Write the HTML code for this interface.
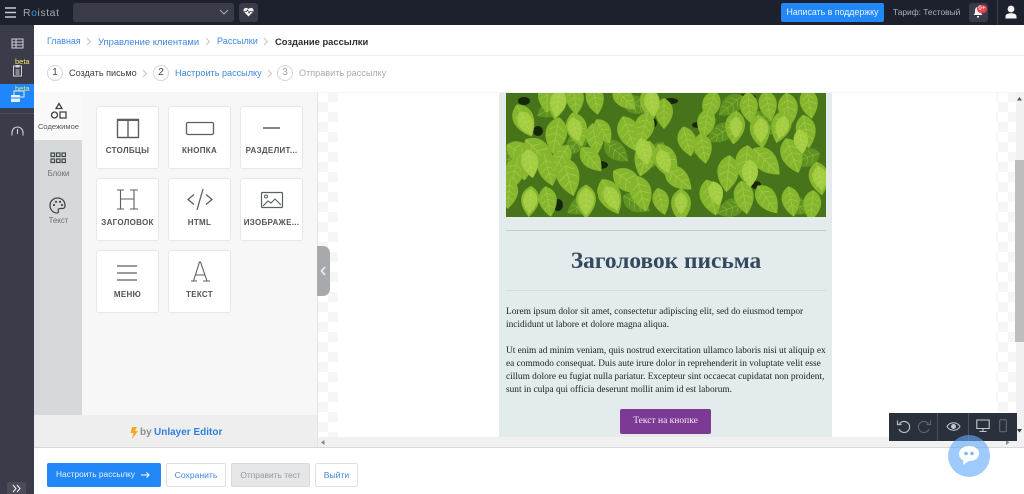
<!DOCTYPE html>
<html><head><meta charset="utf-8">
<style>
*{box-sizing:border-box}
html,body{margin:0;padding:0;width:1024px;height:494px;overflow:hidden;background:#fff;font-family:"Liberation Sans",sans-serif}
.a{position:absolute}
.t{position:absolute;white-space:nowrap}
.card{position:absolute;width:63px;height:63px;background:#fff;border:1px solid #e8e8e8;border-radius:3px;box-shadow:0 0 1px rgba(0,0,0,.05)}
.card span{position:absolute;left:0;right:0;top:39px;text-align:center;font-size:8px;font-weight:bold;color:#505659;letter-spacing:.3px;white-space:nowrap}
.card svg{position:absolute;left:0;top:0}
.chev{fill:none;stroke:#c4c7c9;stroke-width:1}
.num{position:absolute;width:16px;height:16px;border:1px solid #d5d5d5;border-radius:50%;text-align:center;font-size:10px;line-height:14px;background:#fff}
.btn{position:absolute;border-radius:2px;font-size:8.6px;text-align:center;line-height:23px;height:24px}
.bc{position:absolute;white-space:nowrap;top:36px;font-size:9.4px;color:#3f86e0}
.st{position:absolute;white-space:nowrap;top:68px;font-size:9.1px}
</style></head>
<body>
<div class="a" style="left:0;top:0;width:1024px;height:25px;background:#1d212d"></div>
<svg class="a" style="left:5px;top:7px" width="12" height="11"><path d="M0 1h11M0 5.500h11M0 10h11" stroke="#c8cacd" stroke-width="1.400"/></svg>
<div class="t" style="left:23px;top:7px;font-size:10.500px;color:#a4a9b0;letter-spacing:.55px">R<span style="color:#3f8fe8">o</span>istat</div>
<div class="a" style="left:73px;top:3px;width:161px;height:19px;background:#393c48;border-radius:3px"></div>
<svg class="a" style="left:219px;top:9px" width="10" height="7"><path d="M1 1l4 4 4-4" fill="none" stroke="#a5a8ae" stroke-width="1.100"/></svg>
<div class="a" style="left:239px;top:3px;width:19px;height:19px;background:#393c48;border-radius:3px"></div>
<svg class="a" style="left:243px;top:7px" width="11" height="10"><path d="M5.500 9.500L.8 4.600C-.6 2 2.800-.8 5.500 2 8.200-.8 11.600 2 10.200 4.600Z" fill="#f2f2f2"/><path d="M1 4.500h2.500l1-1.500 1.500 3 1-1.500H10" fill="none" stroke="#393c48" stroke-width=".7"/></svg>
<div class="a" style="left:781px;top:3px;width:103px;height:19px;background:#2288f8;border-radius:2px"></div>
<div class="t" style="left:781px;top:3px;width:103px;text-align:center;font-size:8.800px;line-height:19px;color:#e8f2ff">Написать в поддержку</div>
<div class="t" style="left:893px;top:7px;font-size:8.400px;color:#aeb1b6">Тариф: Тестовый</div>
<div class="a" style="left:969px;top:3px;width:19px;height:19px;background:#393c48;border-radius:3px"></div>
<svg class="a" style="left:973px;top:7px" width="10" height="11"><path d="M5 0C2.500 0 2 2 2 4.500 2 6.500 1 7.500 .5 8h9C9 7.500 8 6.500 8 4.500 8 2 7.500 0 5 0ZM4 9h2v1.500H4Z" fill="#f4f4f4"/></svg>
<div class="a" style="left:977px;top:5px;width:10px;height:8px;background:#e8434c;border-radius:4px;color:#fff;font-size:6.500px;line-height:8px;text-align:center">9+</div>
<div class="a" style="left:997px;top:0;width:1px;height:25px;background:#3b3e49"></div>
<svg class="a" style="left:1005px;top:5px" width="12" height="14"><circle cx="6" cy="4" r="3.400" fill="#f4f4f4"/><path d="M.5 13.500V11.500C.5 9.500 2.500 8.300 6 8.300S11.500 9.500 11.500 11.500V13.500Z" fill="#f4f4f4"/></svg>

<div class="a" style="left:0;top:25px;width:34px;height:469px;background:#3a3d49"></div>
<div class="a" style="left:0;top:84px;width:34px;height:24px;background:#1f87fb"></div>
<div class="a" style="left:0;top:113px;width:34px;height:1px;background:#4c4f5a"></div>
<svg class="a" style="left:11px;top:38px" width="13" height="11"><path d="M1 1h11v9H1ZM1 4h11M1 7h11M5 1v9" fill="none" stroke="#d0d1d4" stroke-width="1"/></svg>
<svg class="a" style="left:12px;top:64px" width="11" height="13"><path d="M1.500 2h8v10h-8ZM4 1.500h3v1.500H4ZM3.500 6h4M3.500 8h4M3.500 10h4" fill="none" stroke="#d0d1d4" stroke-width="1"/></svg>
<div class="t" style="left:15px;top:57px;font-size:7.500px;color:#f4e46a">beta</div>
<svg class="a" style="left:10px;top:90px" width="15" height="13"><rect x="4" y="1" width="10" height="6" fill="none" stroke="#e6f1ff"/><rect x="1" y="5" width="9" height="7" fill="#e6f1ff"/><path d="M1 8h9" stroke="#1f87fb"/></svg>
<div class="t" style="left:15px;top:84px;font-size:7.500px;color:#f4e46a">beta</div>
<svg class="a" style="left:11px;top:126px" width="13" height="10"><path d="M1 9.500V6.500A5.500 5.500 0 0 1 12 6.500V9.500M6.500 3v5" fill="none" stroke="#cfd0d3" stroke-width="1.100"/></svg>
<div class="a" style="left:7px;top:482px;width:19px;height:12px;background:#4a4d59;border-radius:2px 2px 0 0"></div>
<svg class="a" style="left:12px;top:484px" width="10" height="9"><path d="M1 1l3 3.500-3 3.500M5 1l3 3.500-3 3.500" fill="none" stroke="#eee" stroke-width="1.100"/></svg>

<div class="bc" style="left:47px;font-size:8.800px">Главная</div>
<svg class="a" style="left:86px;top:37px" width="7" height="9"><path class="chev" d="M1 1l3.500 3.500L1 8"/></svg>
<div class="bc" style="left:98px">Управление клиентами</div>
<svg class="a" style="left:205px;top:37px" width="7" height="9"><path class="chev" d="M1 1l3.500 3.500L1 8"/></svg>
<div class="bc" style="left:217px;font-size:9.100px">Рассылки</div>
<svg class="a" style="left:263px;top:37px" width="7" height="9"><path class="chev" d="M1 1l3.500 3.500L1 8"/></svg>
<div class="t" style="left:275px;top:36px;font-size:9.400px;font-weight:bold;color:#2c2f33">Создание рассылки</div>
<div class="a" style="left:34px;top:55px;width:990px;height:1px;background:#eeeeee"></div>

<div class="num" style="left:47px;top:65px;color:#444">1</div>
<div class="st" style="left:69px;color:#3b3e42">Создать письмо</div>
<svg class="a" style="left:142px;top:69px" width="7" height="9"><path class="chev" d="M1 1l3.500 3.500L1 8"/></svg>
<div class="num" style="left:153px;top:65px;color:#444">2</div>
<div class="st" style="left:175px;color:#3f86e0">Настроить рассылку</div>
<svg class="a" style="left:267px;top:69px" width="7" height="9"><path class="chev" d="M1 1l3.500 3.500L1 8"/></svg>
<div class="num" style="left:277px;top:65px;color:#a5a5a5">3</div>
<div class="st" style="left:299px;color:#a8aaad">Отправить рассылку</div>

<!-- panel -->
<div class="a" style="left:34px;top:92px;width:284px;height:355px;background:#f7f7f7;border-right:1px solid #e4e4e4"></div>
<div class="a" style="left:34px;top:140px;width:48px;height:275px;background:#d5d9dc"></div>
<div class="a" style="left:34px;top:92px;width:48px;height:48px;background:#f9f9f9"></div>
<svg class="a" style="left:50px;top:102px" width="18" height="18"><path d="M9 1.500l3 5H6ZM10 10h6v6h-6Z" fill="none" stroke="#3e4245" stroke-width="1.300"/><circle cx="4.500" cy="13" r="3" fill="none" stroke="#3e4245" stroke-width="1.300"/></svg>
<div class="t" style="left:34px;top:122px;width:49px;text-align:center;font-size:7.600px;color:#55595c">Содежимое</div>
<svg class="a" style="left:50px;top:152px" width="16" height="12"><g fill="none" stroke="#42474a" stroke-width="1.200"><rect x="1" y="1" width="3.500" height="3.500"/><rect x="6.500" y="1" width="3.500" height="3.500"/><rect x="12" y="1" width="3.500" height="3.500"/><rect x="1" y="7" width="3.500" height="3.500"/><rect x="6.500" y="7" width="3.500" height="3.500"/><rect x="12" y="7" width="3.500" height="3.500"/></g></svg>
<div class="t" style="left:34px;top:169px;width:49px;text-align:center;font-size:7.800px;color:#6b7074">Блоки</div>
<svg class="a" style="left:49px;top:197px" width="17" height="17"><path d="M8.500 1C4 1 1 4.500 1 8.500S4 16 8 16c1.500 0 1.800-1 1.300-2-.6-1.300.2-2.500 1.700-2.500h2.500c1.500 0 2.500-1 2.500-3C16 4 13 1 8.500 1Z" fill="none" stroke="#42474a" stroke-width="1.300"/><circle cx="5" cy="8" r="1.100" fill="#42474a"/><circle cx="7" cy="4.800" r="1.100" fill="#42474a"/><circle cx="11" cy="4.800" r="1.100" fill="#42474a"/><circle cx="13" cy="8" r="1.100" fill="#42474a"/></svg>
<div class="t" style="left:34px;top:216px;width:49px;text-align:center;font-size:7.800px;color:#6b7074">Текст</div>

<div class="card" style="left:96px;top:106px"><svg width="61" height="40"><path d="M20.500 12.500h21v18h-21ZM31 12.500v18" fill="none" stroke="#5a5f62" stroke-width="1.400"/><path d="M20 12h22v2H20Z" fill="#5a5f62"/></svg><span>СТОЛБЦЫ</span></div>
<div class="card" style="left:168px;top:106px"><svg width="61" height="40"><rect x="17.500" y="15.500" width="27" height="12" rx="1.500" fill="none" stroke="#5a5f62" stroke-width="1.300"/></svg><span>КНОПКА</span></div>
<div class="card" style="left:240px;top:106px"><svg width="61" height="40"><path d="M22 21h17" stroke="#5a5f62" stroke-width="1.500"/></svg><span>РАЗДЕЛИТ...</span></div>
<div class="card" style="left:96px;top:178px"><svg width="61" height="40"><path d="M20 11h7M33 11h8M20 30h7M33 30h8M23.500 11v19M37 11v19M23.500 20H37" fill="none" stroke="#5a5f62" stroke-width="1.100"/></svg><span>ЗАГОЛОВОК</span></div>
<div class="card" style="left:168px;top:178px"><svg width="61" height="40"><path d="M25 15.500l-6 5 6 5M37 15.500l6 5-6 5M34 10l-6 21" fill="none" stroke="#5a5f62" stroke-width="1.300"/></svg><span>HTML</span></div>
<div class="card" style="left:240px;top:178px"><svg width="61" height="40"><rect x="20.500" y="13.500" width="21" height="15" rx="1" fill="none" stroke="#5a5f62" stroke-width="1.200"/><circle cx="25" cy="17.500" r="1.500" fill="none" stroke="#5a5f62"/><path d="M22 27l5-5 3 2 4-4 6 6" fill="none" stroke="#5a5f62" stroke-width="1.100"/></svg><span>ИЗОБРАЖЕ...</span></div>
<div class="card" style="left:96px;top:250px"><svg width="61" height="40"><path d="M20 15h20M20 22h20M20 29h20" stroke="#5a5f62" stroke-width="1.200"/></svg><span>МЕНЮ</span></div>
<div class="card" style="left:168px;top:250px"><svg width="61" height="40"><path d="M22 30h6M34 30h7M24.500 30l6-19h1l6.500 19M27 24h9.500" fill="none" stroke="#5a5f62" stroke-width="1.100"/></svg><span>ТЕКСТ</span></div>

<div class="a" style="left:34px;top:415px;width:283px;height:32px;background:#eeeeee"></div>
<svg class="a" style="left:130px;top:427px" width="8" height="12"><path d="M2 0h5L5 4h3L2 12l1.500-6H.5Z" fill="#f5a623"/></svg>
<div class="t" style="left:140px;top:427px;font-size:10px;font-weight:bold;color:#8c8f92">by</div>
<div class="t" style="left:154px;top:427px;font-size:10px;font-weight:bold;color:#2f7fe0">Unlayer Editor</div>

<!-- canvas -->
<div class="a" style="left:318px;top:92px;width:698px;height:345px;background-color:#fff;background-image:conic-gradient(#f6f6f6 25%,#fff 0 50%,#f6f6f6 0 75%,#fff 0);background-size:20px 20px"></div>
<div class="a" style="left:338px;top:92px;width:658px;height:345px;background:#fff"></div>
<div class="a" style="left:499px;top:92px;width:333px;height:345px;background:#e3ebed"></div>
<div class="a" style="left:318px;top:92px;width:706px;height:1px;background:#f4f4f4"></div>

<svg class="a" style="left:506px;top:93px" width="320" height="124" viewBox="0 0 320 124">
<defs>
<g id="l"><path d="M0 -15C12 -9 12 4 0 16C-12 4 -12 -9 0 -15Z"/><path d="M0 -14V15M0 -8L6 -4M0 -8L-6 -4M0 -2L7 2M0 -2L-7 2M0 4L5 8M0 4L-5 8" fill="none" stroke="#d4ea70" stroke-opacity=".35" stroke-width=".7"/></g>
</defs>
<rect width="320" height="124" fill="#47741a"/>
<g fill="#162608">
<ellipse cx="18" cy="8" rx="6" ry="4"/><ellipse cx="32" cy="38" rx="5" ry="5"/><ellipse cx="100" cy="102" rx="9" ry="3"/><ellipse cx="94" cy="72" rx="8" ry="4"/><ellipse cx="52" cy="112" rx="5" ry="6"/><ellipse cx="192" cy="32" rx="6" ry="3"/><ellipse cx="240" cy="4" rx="10" ry="3"/><ellipse cx="290" cy="60" rx="8" ry="3"/><ellipse cx="146" cy="30" rx="5" ry="5"/><ellipse cx="165" cy="8" rx="7" ry="3"/><ellipse cx="250" cy="92" rx="5" ry="4"/>
</g>
<g fill="#5f9221">
<use href="#l" transform="translate(5 62) rotate(20)"/><use href="#l" transform="translate(30 60) rotate(-30)"/><use href="#l" transform="translate(70 50) rotate(40)"/><use href="#l" transform="translate(110 58) rotate(-50)"/><use href="#l" transform="translate(150 62) rotate(30)"/><use href="#l" transform="translate(190 52) rotate(-70)"/><use href="#l" transform="translate(215 40) rotate(60)"/><use href="#l" transform="translate(260 30) rotate(-40)"/><use href="#l" transform="translate(300 65) rotate(70)"/>
<use href="#l" transform="translate(45 15) rotate(60)"/><use href="#l" transform="translate(130 12) rotate(-70)"/><use href="#l" transform="translate(225 12) rotate(50)"/>
<use href="#l" transform="translate(75 112) rotate(60)"/><use href="#l" transform="translate(130 110) rotate(-60)"/><use href="#l" transform="translate(225 115) rotate(70)"/><use href="#l" transform="translate(290 112) rotate(-60)"/>
</g>
<g fill="#86b62e">
<use href="#l" transform="translate(41 4) rotate(0) scale(1)"/><use href="#l" transform="translate(51 9) rotate(8) scale(1.100)"/><use href="#l" transform="translate(69 6) rotate(-5)"/><use href="#l" transform="translate(89 6) rotate(-10)"/><use href="#l" transform="translate(118 5) rotate(-45)"/><use href="#l" transform="translate(144 10) rotate(-8) scale(1.100)"/><use href="#l" transform="translate(158 20) rotate(0)"/><use href="#l" transform="translate(205 12) rotate(15)"/><use href="#l" transform="translate(243 14) rotate(-5)"/><use href="#l" transform="translate(262 12) rotate(-10)"/><use href="#l" transform="translate(282 16) rotate(-5) scale(1.100)"/><use href="#l" transform="translate(303 10) rotate(-10)"/>
<use href="#l" transform="translate(18 27) rotate(-25) scale(1.150)"/><use href="#l" transform="translate(50 42) rotate(10) scale(1.200)"/><use href="#l" transform="translate(71 36) rotate(-15) scale(1.150)"/><use href="#l" transform="translate(89 45) rotate(-10)"/><use href="#l" transform="translate(97 38) rotate(-30) scale(.9)"/><use href="#l" transform="translate(123 40) rotate(-20) scale(1.200)"/><use href="#l" transform="translate(138 35) rotate(15) scale(1.100)"/><use href="#l" transform="translate(181 48) rotate(-15)"/><use href="#l" transform="translate(200 30) rotate(10)"/><use href="#l" transform="translate(229 34) rotate(5) scale(1.100)"/><use href="#l" transform="translate(254 38) rotate(-8) scale(1.100)"/><use href="#l" transform="translate(275 33) rotate(15) scale(1.100)"/><use href="#l" transform="translate(300 38) rotate(-10) scale(1.100)"/>
<use href="#l" transform="translate(15 60) rotate(-60) scale(1.100)"/><use href="#l" transform="translate(33 60) rotate(-45) scale(1.300)"/><use href="#l" transform="translate(17 70) rotate(-5) scale(1.100)"/><use href="#l" transform="translate(8 80) rotate(15) scale(1.100)"/><use href="#l" transform="translate(42 76) rotate(-15) scale(1.100)"/><use href="#l" transform="translate(62 83) rotate(-15) scale(1.300)"/><use href="#l" transform="translate(55 65) rotate(30)"/><use href="#l" transform="translate(85 66) rotate(-40)"/><use href="#l" transform="translate(122 88) rotate(-55) scale(1.200)"/><use href="#l" transform="translate(139 65) rotate(15) scale(1.200)"/><use href="#l" transform="translate(160 68) rotate(-25) scale(1.250)"/><use href="#l" transform="translate(172 85) rotate(-50) scale(1.100)"/><use href="#l" transform="translate(197 55) rotate(-10)"/><use href="#l" transform="translate(222 80) rotate(5) scale(1.200)"/><use href="#l" transform="translate(240 70) rotate(5) scale(1.200)"/><use href="#l" transform="translate(260 68) rotate(-45) scale(1.200)"/><use href="#l" transform="translate(286 62) rotate(-20) scale(1.200)"/><use href="#l" transform="translate(313 85) rotate(-10) scale(1.100)"/>
<use href="#l" transform="translate(3 100) rotate(5)"/><use href="#l" transform="translate(24 108) rotate(5)"/><use href="#l" transform="translate(42 108) rotate(-10)"/><use href="#l" transform="translate(80 108) rotate(0) scale(1.100)"/><use href="#l" transform="translate(104 103) rotate(-25) scale(1.250)"/><use href="#l" transform="translate(135 100) rotate(-15) scale(1.200)"/><use href="#l" transform="translate(155 108) rotate(-15) scale(.9)"/><use href="#l" transform="translate(175 112) rotate(0) scale(1.100)"/><use href="#l" transform="translate(205 104) rotate(-15) scale(1.200)"/><use href="#l" transform="translate(238 104) rotate(-10) scale(1.100)"/><use href="#l" transform="translate(261 106) rotate(-35) scale(1.100)"/><use href="#l" transform="translate(285 108) rotate(-10)"/><use href="#l" transform="translate(306 112) rotate(5)"/>
</g>
<g fill="#a3cc42">
<use href="#l" transform="translate(24 70) rotate(-10) scale(.95)"/><use href="#l" transform="translate(24 108) rotate(5) scale(.8)"/><use href="#l" transform="translate(80 108) scale(.9)"/><use href="#l" transform="translate(52 10) rotate(8) scale(.9)"/><use href="#l" transform="translate(20 30) rotate(-25) scale(.85)"/><use href="#l" transform="translate(69 36) rotate(-15) scale(.8)"/><use href="#l" transform="translate(138 58) rotate(-15) scale(.9)"/><use href="#l" transform="translate(158 68) rotate(-20) scale(.8)"/><use href="#l" transform="translate(146 10) rotate(-8) scale(.85)"/><use href="#l" transform="translate(244 80) scale(.9)"/><use href="#l" transform="translate(255 37) scale(.8)"/><use href="#l" transform="translate(295 48) rotate(-8) scale(.8)"/><use href="#l" transform="translate(210 100) rotate(-15) scale(.8)"/><use href="#l" transform="translate(106 105) rotate(-25) scale(.85)"/><use href="#l" transform="translate(276 34) rotate(15) scale(.75)"/><use href="#l" transform="translate(175 110) scale(.7)"/><use href="#l" transform="translate(314 85) rotate(-10) scale(.8)"/><use href="#l" transform="translate(230 34) scale(.7)"/>
</g>
</svg>

<div class="a" style="left:506px;top:230px;width:320px;height:1px;background:#c3cbce"></div>
<div class="t" style="left:506px;top:247px;width:320px;text-align:center;font-family:'Liberation Serif',serif;font-size:23.400px;font-weight:bold;color:#34495e;line-height:28px">Заголовок письма</div>
<div class="a" style="left:506px;top:290px;width:320px;height:1px;background:#d3dcde"></div>
<div class="a" style="left:506px;top:306px;width:322px;font-family:'Liberation Serif',serif;font-size:9.340px;line-height:13px;color:#222;white-space:nowrap">Lorem ipsum dolor sit amet, consectetur adipiscing elit, sed do eiusmod tempor<br>incididunt ut labore et dolore magna aliqua.<br><br>Ut enim ad minim veniam, quis nostrud exercitation ullamco laboris nisi ut aliquip ex<br>ea commodo consequat. Duis aute irure dolor in reprehenderit in voluptate velit esse<br>cillum dolore eu fugiat nulla pariatur. Excepteur sint occaecat cupidatat non proident,<br>sunt in culpa qui officia deserunt mollit anim id est laborum.</div>
<div class="a" style="left:620px;top:409px;width:91px;height:25px;background:#7d3a94;border-radius:2px;color:#f2e8f6;font-family:'Liberation Serif',serif;font-size:9.500px;line-height:25px;text-align:center">Текст на кнопке</div>

<!-- scrollbars -->
<div class="a" style="left:1016px;top:92px;width:8px;height:345px;background:#f1f1f1"></div>
<div class="a" style="left:1015px;top:160px;width:9px;height:182px;background:#bdbdbd"></div>
<svg class="a" style="left:1016px;top:96px" width="8" height="6"><path d="M1 4.500h5L3.500 1Z" fill="#555"/></svg>
<svg class="a" style="left:1016px;top:428px" width="8" height="6"><path d="M1 1h5L3.500 4.500Z" fill="#333"/></svg>
<div class="a" style="left:318px;top:437px;width:706px;height:10px;background:#f1f1f1"></div>
<svg class="a" style="left:320px;top:439px" width="6" height="7"><path d="M4.500 1v5L1 3.500Z" fill="#888"/></svg>
<svg class="a" style="left:1005px;top:439px" width="6" height="7"><path d="M1 1v5L4.500 3.500Z" fill="#888"/></svg>
<div class="a" style="left:34px;top:447px;width:990px;height:1px;background:#d8d8d8"></div>

<!-- toolbar -->
<div class="a" style="left:889px;top:413px;width:128px;height:28px;background:#2a303c"></div>
<div class="a" style="left:937px;top:413px;width:1px;height:28px;background:#4a4f5a"></div>
<div class="a" style="left:968px;top:413px;width:1px;height:28px;background:#4a4f5a"></div>
<svg class="a" style="left:896px;top:419px" width="15" height="15"><path d="M3.500 5A5.500 5.500 0 1 1 3 10M1.500 1.500v4h4" fill="none" stroke="#b9bbbf" stroke-width="1.200"/></svg>
<svg class="a" style="left:917px;top:419px" width="15" height="15"><path d="M11.500 5A5.500 5.500 0 1 0 12 10M13.500 1.500v4h-4" fill="none" stroke="#5d626b" stroke-width="1.200"/></svg>
<svg class="a" style="left:946px;top:421px" width="15" height="11"><path d="M1 5.500C4 .5 11 .5 14 5.500 11 10.500 4 10.500 1 5.500Z" fill="none" stroke="#c5c7ca" stroke-width="1.100"/><circle cx="7.500" cy="5.500" r="2.500" fill="#c5c7ca"/></svg>
<svg class="a" style="left:976px;top:419px" width="14" height="14"><path d="M.8 1h12.400v8.500H.8ZM7 9.500V12M3.500 12.500h7" fill="none" stroke="#c5c7ca" stroke-width="1.100"/></svg>
<svg class="a" style="left:999px;top:419px" width="8" height="14"><rect x=".7" y=".7" width="6.600" height="12" rx="1" fill="none" stroke="#6a6f78" stroke-width="1"/></svg>

<!-- bottom buttons -->
<div class="btn" style="left:47px;top:463px;width:114px;background:#2288f8;color:#e8f2ff;text-align:left;padding-left:9px;font-size:8.300px">Настроить рассылку</div>
<svg class="a" style="left:141px;top:471px" width="9" height="8"><path d="M0 4h8M5.500 1.500L8 4 5.500 6.500" fill="none" stroke="#fff" stroke-width="1.100"/></svg>
<div class="btn" style="left:166px;top:463px;width:60px;border:1px solid #e0e0e0;color:#3f86e0;line-height:22px">Сохранить</div>
<div class="btn" style="left:231px;top:463px;width:79px;background:#e4e6e8;border:1px solid #d8dadc;color:#95989b;line-height:22px;font-size:8.400px">Отправить тест</div>
<div class="btn" style="left:315px;top:463px;width:43px;border:1px solid #e0e0e0;color:#3f86e0;line-height:22px">Выйти</div>

<!-- chat -->
<div class="a" style="left:948px;top:435px;width:42px;height:42px;border-radius:50%;background:rgba(100,170,250,.62)"></div>
<svg class="a" style="left:957px;top:444px" width="24" height="24"><path d="M12 2C6 2 2 5.500 2 10c0 3 2 5.300 4.500 6.500L6 21l6-4c6 0 10-3 10-7.500S18 2 12 2Z" fill="#fff"/><circle cx="9" cy="9.500" r="1.800" fill="#7fb6f5"/><circle cx="15" cy="9.500" r="1.800" fill="#7fb6f5"/></svg>

<!-- collapse -->
<div class="a" style="left:317px;top:246px;width:13px;height:50px;background:#a6aaad;border-radius:0 7px 7px 0"></div>
<svg class="a" style="left:320px;top:266px" width="7" height="10"><path d="M5 1L1.500 5 5 9" fill="none" stroke="#f2f2f2" stroke-width="1.500"/></svg>
</body></html>
